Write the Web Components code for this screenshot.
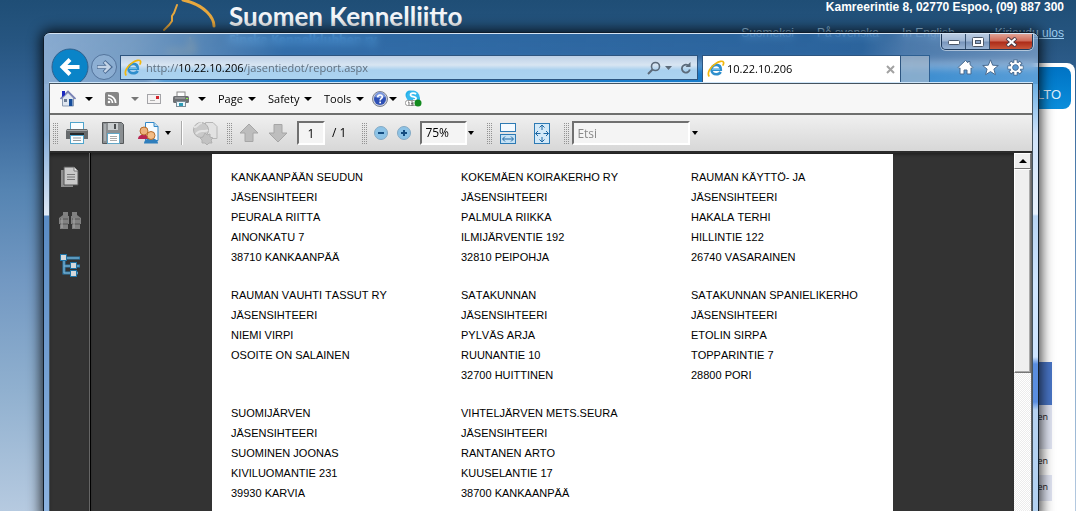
<!DOCTYPE html>
<html lang="fi">
<head>
<meta charset="utf-8">
<title>10.22.10.206</title>
<style>
html,body{margin:0;height:100%;overflow:hidden}
body{font-family:"Liberation Sans",Arial,sans-serif;font-size:12px;color:#000}
</style>
</head>
<body>
<desk-top>
  <site-page></site-page>
  <browser-window slot="window">
    <nav-bar slot="nav"></nav-bar>
    <command-bar slot="commands"></command-bar>
    <pdf-toolbar slot="toolbar"></pdf-toolbar>
    <pdf-view slot="view">
      <mailing-label><div>KANKAANPÄÄN SEUDUN</div><div>JÄSENSIHTEERI</div><div>PEURALA RIITTA</div><div>AINONKATU 7</div><div>38710 KANKAANPÄÄ</div></mailing-label>
      <mailing-label><div>KOKEMÄEN KOIRAKERHO RY</div><div>JÄSENSIHTEERI</div><div>PALMULA RIIKKA</div><div>ILMIJÄRVENTIE 192</div><div>32810 PEIPOHJA</div></mailing-label>
      <mailing-label><div>RAUMAN KÄYTTÖ- JA</div><div>JÄSENSIHTEERI</div><div>HAKALA TERHI</div><div>HILLINTIE 122</div><div>26740 VASARAINEN</div></mailing-label>
      <mailing-label><div>RAUMAN VAUHTI TASSUT RY</div><div>JÄSENSIHTEERI</div><div>NIEMI VIRPI</div><div>OSOITE ON SALAINEN</div></mailing-label>
      <mailing-label><div>SATAKUNNAN</div><div>JÄSENSIHTEERI</div><div>PYLVÄS ARJA</div><div>RUUNANTIE 10</div><div>32700 HUITTINEN</div></mailing-label>
      <mailing-label><div>SATAKUNNAN SPANIELIKERHO</div><div>JÄSENSIHTEERI</div><div>ETOLIN SIRPA</div><div>TOPPARINTIE 7</div><div>28800 PORI</div></mailing-label>
      <mailing-label><div>SUOMIJÄRVEN</div><div>JÄSENSIHTEERI</div><div>SUOMINEN JOONAS</div><div>KIVILUOMANTIE 231</div><div>39930 KARVIA</div></mailing-label>
      <mailing-label><div>VIHTELJÄRVEN METS.SEURA</div><div>JÄSENSIHTEERI</div><div>RANTANEN ARTO</div><div>KUUSELANTIE 17</div><div>38700 KANKAANPÄÄ</div></mailing-label>
    </pdf-view>
  </browser-window>
</desk-top>
<script>
function component(name, html) {
  const template = document.createElement('template');
  template.innerHTML = html;
  customElements.define(name, class extends HTMLElement {
    constructor() {
      super();
      this.attachShadow({ mode: 'open' }).append(template.content.cloneNode(true));
    }
  });
}

const IE_LOGO = `<svg width="18" height="18" viewBox="0 0 18 18" aria-hidden="true">
  <path d="M4.600 9.800h9.200c0-3-1.800-4.900-4.500-4.900-2.900 0-4.800 2.100-4.800 4.900 0 2.700 2 4.500 4.800 4.500 2.100 0 3.600-.9 4.300-2.400" fill="none" stroke="#2f8fcd" stroke-width="2.600"/>
  <path d="M5 9.300h8" stroke="#7cc6ee" stroke-width="1"/>
  <path d="M2.300 16.500C-.3 13.500 3 7 8.500 3.600 12 1.300 15.800.5 16.500 2.200c.4 1-.1 2.300-.8 3.400" fill="none" stroke="#f2b70c" stroke-width="1.700"/></svg>`;
const ARROW = `<svg class="arrow" width="8" height="4" viewBox="0 0 8 4" aria-hidden="true"><path d="M0 0h8L4 4z" fill="currentColor"/></svg>`;

component('desk-top', `
<style>
:host{display:block;position:relative;height:100vh;overflow:hidden}
::slotted([slot=window]){position:absolute;left:43px;right:37px;top:32px;bottom:-8px}
</style>
<slot></slot><slot name="window"></slot>`);

component('site-page', `
<style>
:host{display:block;height:100%;background:linear-gradient(#1f4e76,#265580 40px,#38679a 110px,#5584b2 190px,#7298c2 280px,#90b0cf 390px,#b6cae0 511px)}
header{display:flex;justify-content:space-between;height:63px;padding:0 12px 0 160px;box-sizing:border-box}
.brand{display:flex}
.brand svg{width:69px;height:63px}
h1{margin:0;font:bold 26px/33px Lato,"Open Sans",sans-serif;color:#f4f6f9;white-space:nowrap}
.brand p{margin:0;font:bold 12px/14px "Open Sans",sans-serif;color:#6bb5e8}
.info{text-align:right;font-size:12px;color:#fff;white-space:nowrap}
.info b{display:block;line-height:14px}
nav{display:flex;justify-content:flex-end;gap:23px;margin-top:12px;line-height:14px}
nav a{color:#9dcdf0;text-decoration:none}
nav a:last-child{text-decoration:underline;margin-left:17px}
main{height:100%;margin:0 1px 0 152px;background:#fff;border-radius:8px;padding:4px 4px 0;box-sizing:border-box}
.menu{display:flex;justify-content:flex-end;align-items:center;height:42px;border-radius:8px;background:linear-gradient(#0073c4,#0a8ddb);padding-right:10px}
.menu a{color:#dff0fc;font-size:13px;text-decoration:none;padding-top:12px}
table{width:calc(100% - 39px);margin:253px 0 0 20px;border-spacing:0;font:9px/12px "Open Sans",sans-serif;text-align:right}
th{height:43px;background:#4874c4;padding:0}
td{padding:6px 4px;height:14px;color:#222;vertical-align:top}
tr:nth-child(2) td{height:32px}
tr:nth-child(even) td{background:#e0e4f2}
</style>
<header>
  <div class="brand">
    <svg viewBox="0 0 69 63" fill="none" stroke="#e7a83e" stroke-linecap="round" aria-hidden="true">
      <path d="M17 5l-3 8-2 3v5l-3 4-5 5" stroke-width="2"/>
      <path d="M23 0c9 2 18 6 24 12 5 5 7 9 7 14" stroke-width="3"/>
      <path d="M30 38c1 4 2 8 4 13-8 1-18 0-27 1" stroke-width="2"/></svg>
    <div><h1>Suomen Kennelliitto</h1><p>Finska Kennelklubben ry</p></div>
  </div>
  <div class="info"><b>Kamreerintie 8, 02770 Espoo, (09) 887 300</b>
    <nav><a href="#">Suomeksi</a><a href="#">På svenska</a><a href="#">In English</a><a href="#">Kirjaudu ulos</a></nav></div>
</header>
<main>
  <div class="menu"><a href="#">LTO</a></div>
  <table><tr><th></th></tr><tr><td>en</td></tr><tr><td>en</td></tr><tr><td>en</td></tr></table>
</main>`);

component('browser-window', `
<style>
:host{display:block;box-sizing:border-box;border:1px solid #101d2b;border-radius:7px 7px 0 0;box-shadow:0 0 13px 2px rgba(0,0,0,.8)}
.glass{position:relative;display:flex;flex-direction:column;height:100%;box-sizing:border-box;border-radius:6px 6px 0 0;overflow:hidden;padding:0 5px;
 border-top:1px solid #d4e4f4;
 background:
  linear-gradient(#8fb0d6,#86aedb 50px,#dce8f6 130px,#e2ecf8 131px,#5a8cc5 132px,#96bbe6) 0 50px/5px 100% no-repeat,
  linear-gradient(#6db1e6,#cfe3fa 50px,#e8f1fc 130px,#b9d5f3 132px,#cfe5ff 200px,#cfe5ff 273px,#5a8ee0 280px,#5a8ee0 318px,#b6d2f0 326px,#b0d0f2) 100% 50px/5px 100% no-repeat,
  linear-gradient(100deg,rgba(165,195,230,.78),rgba(150,185,222,.7) 90px,rgba(60,130,205,.5) 240px,rgba(50,120,195,.4) 76%,rgba(110,155,210,.5) 80%,rgba(175,200,232,.62));
 backdrop-filter:blur(4px)}
.chrome{flex:none;height:48px;border-bottom:1px solid #cfe6fa;position:relative}
.caption{position:absolute;right:0;top:0;display:flex;border:1px solid #1f3a5a;border-top:0;border-radius:0 0 5px 5px;overflow:hidden;box-shadow:0 0 0 1px rgba(255,255,255,.5)}
.caption button{width:24px;height:15px;padding:0;border:0;border-right:1px solid #37516f;background:linear-gradient(#b9cbe1,#9fb6d3 7px,#7895bb 8px,#9ab4d4);display:grid;place-items:center}
.caption button:last-child{width:42px;border-right:0;background:linear-gradient(#e0a294,#cf6a58 7px,#ac2b18 8px,#c8563a)}
.body{flex:1;min-height:0;display:flex;flex-direction:column;border:1px solid #44535f;border-bottom:0;background:#333}
slot[name=view]{display:contents}
</style>
<div class="glass">
  <div class="chrome"><slot name="nav"></slot>
    <div class="caption">
      <button aria-label="Minimize"><svg width="12" height="6"><rect x=".5" y="1.500" width="11" height="4" rx="1" fill="#fff" stroke="#4a5667"/></svg></button>
      <button aria-label="Maximize"><svg width="12" height="10"><rect x=".5" y=".5" width="11" height="9" rx="1" fill="#fff" stroke="#4a5667"/><rect x="3.500" y="3.500" width="5" height="3" fill="#8ea7c8" stroke="#4a5667"/></svg></button>
      <button aria-label="Close"><svg width="13" height="10" viewBox="0 0 13 10"><path d="M2 1l9 8M11 1L2 9" stroke="#4c3b46" stroke-width="4"/><path d="M2.500 1.500l8 7M10.500 1.500l-8 7" stroke="#fff" stroke-width="2.200"/></svg></button>
    </div>
  </div>
  <div class="body"><slot name="commands"></slot><slot name="toolbar"></slot><slot name="view"></slot></div>
</div>`);

component('nav-bar', `
<style>
:host{display:flex;height:48px;padding:14px 9px 0 2px;box-sizing:border-box;overflow:hidden;font:11px/16px "Open Sans","Noto Sans",sans-serif}
button{border:0;padding:0;background:none;display:grid;place-items:center;color:#5b6a7a}
.back,.fwd{flex:none}
.back{width:38px;height:38px}
.fwd{width:28px;height:28px;margin:5px 2px 0 1px}
.address{flex:1;display:flex;align-items:center;box-sizing:border-box;height:25px;margin-top:7px;border:1px solid #2d5580;background:linear-gradient(#bdd0e6,#d8e5f2 9px,#a9d0ee 14px,#abd3f0);padding:0 5px 0 3px}
.url{flex:1;padding-left:4px;color:#5f6f7f;white-space:nowrap}
.url b{font-weight:400;color:#000}
.address button+button{margin-left:4px}
.address .stop{margin-left:8px}
.tab{display:flex;align-items:center;box-sizing:border-box;width:199px;height:27px;margin:7px 0 0 4px;border:1px solid #2d5580;border-bottom:0;background:#fff;padding:0 5px 0 4px}
.tab span{flex:1;padding-left:2px}
.new{width:29px;height:27px;margin-top:7px;border:1px solid #2d5f92;border-left:0;border-bottom:0;background:rgba(165,185,205,.7);box-sizing:border-box}
.tools{display:flex;gap:8px;margin:7px 0 0 27px;height:24px}
</style>
<button class="back" aria-label="Back"><svg width="38" height="38"><circle cx="19" cy="19" r="18" fill="#0a84c8" stroke="#31618e"/><path d="M28.500 19H13M19 11.500L11.500 19l7.500 7.500" fill="none" stroke="#fff" stroke-width="4"/></svg></button>
<button class="fwd" aria-label="Forward"><svg width="28" height="28"><circle cx="14" cy="14" r="12.500" fill="rgba(180,205,235,.3)" stroke="#54749c"/><path d="M7 14h12M14 8.500l6 5.500-6 5.500" fill="none" stroke="#4d6d95" stroke-width="4"/><path d="M7.500 14h11M14.500 9l5 5-5 5" fill="none" stroke="#c3d3e6" stroke-width="2.400"/></svg></button>
<div class="address">${IE_LOGO}<span class="url">http://<b>10.22.10.206</b>/jasentiedot/report.aspx</span>
  <button aria-label="Search"><svg width="14" height="14" fill="none" stroke="currentColor"><circle cx="8.500" cy="5.500" r="4" stroke-width="1.600"/><path d="M5.500 8.500L1 13" stroke-width="2"/></svg></button>
  <button aria-label="Search options"><svg width="7" height="4"><path d="M0 0h7L3.500 4z" fill="currentColor"/></svg></button>
  <button class="stop" aria-label="Refresh"><svg width="12" height="14" fill="none" stroke="currentColor"><path d="M8 4.200a4 4 0 1 0 1.800 4.300" stroke-width="1.800"/><path d="M10.500 1v5H5.500z" fill="currentColor" stroke="none"/></svg></button>
</div>
<div class="tab">${IE_LOGO}<span>10.22.10.206</span><button aria-label="Close tab"><svg width="9" height="9"><path d="M1 1l7 7M8 1L1 8" stroke="#a2a2a2" stroke-width="2"/></svg></button></div>
<button class="new" aria-label="New tab"></button>
<div class="tools">
  <button aria-label="Home"><svg width="17" height="17" viewBox="0 0 17 17"><path d="M8.500 1.500l2.500 2.200V2.500h2v3.200l3 2.800-1 1-1-.6V15h-4v-4H7v4H3V8.900l-1 .6-1-1z" fill="#fff" stroke="#4a6a8e"/></svg></button>
  <button aria-label="Favorites"><svg width="17" height="17" viewBox="0 0 17 17"><path d="M8.500.8l2.200 5.400 5.600.3-4.400 3.600 1.500 5.600-4.900-3.100-4.900 3.100 1.500-5.600L.7 6.500l5.600-.3z" fill="#fff" stroke="#4a6a8e"/></svg></button>
  <button aria-label="Tools"><svg width="17" height="17" viewBox="-8.500 -8.500 17 17"><g stroke="#4a6a8e" stroke-width="4.200"><path d="M0-8V8M-8 0H8M-5.600-5.600L5.600 5.600M5.600-5.600L-5.600 5.600"/></g><circle r="5.800" fill="#4a6a8e"/><g stroke="#fff" stroke-width="2.400"><path d="M0-7.300V7.300M-7.300 0H7.300M-5-5L5 5M5-5L-5 5"/></g><circle r="4" fill="#4d8fca" stroke="#fff" stroke-width="2"/><circle r="2.800" fill="#5b9ad2" stroke="#4a6a8e" stroke-width=".8"/></svg></button>
</div>`);

component('command-bar', `
<style>
:host{flex:none;display:flex;align-items:center;gap:12px;height:29px;padding-left:10px;background:#f7f7f7;border-bottom:2px solid #6e6f6e;font:11px/16px "Open Sans","Noto Sans",sans-serif}
button{display:flex;align-items:center;justify-content:space-between;border:0;padding:0;background:none;font:inherit;color:#000;white-space:nowrap}
.icon{width:33px}.rss{width:34px;color:#777}.help{width:25px}
.page{width:38px}.safety{width:44px}.tool{width:40px}
.near{margin-left:-4px}
</style>
<button class="icon" aria-label="Home"><svg width="16" height="17" viewBox="0 0 16 17"><path d="M2.500 8L8 2.500 13.500 8v8H2.500z" fill="#dfe6ef" stroke="#8b9ab0"/><path d="M.5 9L8 1.500 15.500 9" fill="none" stroke="#777fb5" stroke-width="1.600"/><path d="M2 1h3v4L2 7z" fill="#1a28c0"/><rect x="9" y="9" width="3.500" height="7" fill="#164d9b"/><rect x="4" y="9" width="3" height="3" fill="#6c7c93"/></svg>${ARROW}</button>
<button class="rss" aria-label="Feeds"><svg width="14" height="14"><rect width="14" height="14" rx="2" fill="#858585"/><g fill="none" stroke="#fff" stroke-width="1.700"><path d="M3 6.500A4.500 4.500 0 0 1 7.500 11M3 3.300A7.700 7.700 0 0 1 10.700 11"/></g><circle cx="4" cy="10" r="1.300" fill="#fff"/></svg>${ARROW}</button>
<button class="near" aria-label="Mail"><svg width="14" height="12"><rect x=".5" y="1.500" width="13" height="9" fill="#f5f3f3" stroke="#a4a4a8"/><rect x="9" y="3" width="3" height="3" fill="#d5242b"/><path d="M3 7.500h5" stroke="#b0b0b0"/></svg></button>
<button class="icon" aria-label="Print"><svg width="16" height="16"><rect x="4" y="1" width="8" height="5" fill="#fff" stroke="#888"/><rect x="0" y="5" width="16" height="7" rx="1.500" fill="#6d6f73"/><path d="M2 7h10" stroke="#bbb"/><rect x="13" y="7" width="2" height="1" fill="#8f4"/><rect x="3.500" y="10.500" width="9" height="5" fill="#e9f5fb" stroke="#7d8c96"/><rect x="6" y="12" width="4" height="3" fill="#2d9bb5"/></svg>${ARROW}</button>
<button class="page">Page${ARROW}</button>
<button class="safety">Safety${ARROW}</button>
<button class="tool">Tools${ARROW}</button>
<button class="help near" aria-label="Help"><svg width="16" height="16"><circle cx="8" cy="8" r="7.500" fill="#c9cedc" stroke="#7c8290"/><circle cx="8" cy="8" r="6" fill="#2e50b5"/><path d="M3 6a5 5 0 0 1 10 0q-5 2-10 0" fill="#7b97dc"/><path d="M5.700 6.300c0-3 4.600-3 4.600-.3 0 1.800-2.200 1.600-2.200 3.500" fill="none" stroke="#fff" stroke-width="1.600"/><rect x="7.300" y="10.600" width="1.700" height="1.700" fill="#fff"/></svg>${ARROW}</button>
<button class="near" aria-label="Skype"><svg width="17" height="17"><circle cx="5" cy="5" r="4.500" fill="#20aee8"/><circle cx="10.500" cy="9" r="4.500" fill="#20aee8"/><circle cx="8" cy="7" r="6.500" fill="#36b9ee"/><path d="M11 4.200C9.800 2.600 5.500 2.700 5.500 4.900c0 2.400 5.600 1 5.600 3.600 0 1.200-1.600 1.600-3.100 1.500" fill="none" stroke="#fff" stroke-width="1.700"/><rect x=".5" y="10.500" width="11" height="5" rx="2" fill="#fff" stroke="#999"/><path d="M3 12h1v3M6 12h2v3H6M6 13.500h2" fill="none" stroke="#555" stroke-width=".8"/><circle cx="13" cy="13" r="3.500" fill="#128a1e"/></svg></button>`);

component('pdf-toolbar', `
<style>
:host{flex:none;display:flex;align-items:center;height:36px;padding-left:3px;background:linear-gradient(#f0f0f0,#d7d7d7);border-bottom:2px solid #2b2b2b;font:12px/16px "Open Sans","Noto Sans",sans-serif}
button{display:flex;align-items:center;gap:4px;border:0;padding:0;background:none;color:#000}
.grip{flex:none;width:5px;height:21px;margin-right:7px;background:conic-gradient(#929292 25%,transparent 0) -1px 0/2px 2px}
.sep{width:1px;height:24px;background:#aaa;border-right:1px solid #fff}
input,select{box-sizing:border-box;height:24px;border:2px solid;border-color:#707070 #fff #fff #707070;border-radius:0;background:#f4f4f4;font:inherit;padding:0 3px;margin:0;color:#000;appearance:none;outline:0}
.num{width:28px;text-align:center}
select{width:47px}
.find{width:118px;flex:0 1 118px}
.find::placeholder{color:#8a8a8a;opacity:1}
.a{margin-right:7px}.b{margin-right:13px}.c{margin-right:9px}.d{margin-right:16px}
.small{width:7px}
.last{margin-right:3px}
</style>
<div class="grip"></div>
<button class="b" aria-label="Print file"><svg width="24" height="24"><rect x="5.500" y="1.500" width="13" height="8" fill="#f8fdff" stroke="#4fa4cc"/><path d="M2 8h20l1 2v8H1v-8z" fill="#666a6c"/><path d="M2 9.500h20" stroke="#a3a7a9"/><path d="M5 13h14" stroke="#25282a" stroke-width="2"/><rect x="5.500" y="14.500" width="13" height="8" fill="#f8fdff" stroke="#4fa4cc"/><path d="M8 17h8M8 19.500h8" stroke="#999"/></svg></button>
<button class="b" aria-label="Save a copy"><svg width="22" height="22"><path d="M.5.5h19l2 2v19H.5z" fill="#8b8f92" stroke="#55585a"/><path d="M3 2v17" stroke="#a9adb0" stroke-width="2"/><rect x="6" y="1" width="10" height="7" fill="#c9cdcf"/><rect x="12" y="2" width="2" height="5" fill="#4b4e50"/><rect x="5.500" y="11.500" width="12" height="10" fill="#fff" stroke="#62a6c6"/><path d="M8 14.500h7M8 16.500h7M8 18.500h7" stroke="#aaa"/></svg></button>
<button class="c" aria-label="Collaborate"><svg width="24" height="24"><path d="M8.500 1.500H17l4 4v14H8.500z" fill="#f5fbff" stroke="#3288c8"/><path d="M17 1.500v4h4" fill="#bddcf0" stroke="#3288c8"/><path d="M1 18c0-6 11-6 11 0z" fill="#b82553"/><circle cx="7" cy="10" r="4" fill="#edb27c" stroke="#b66d2b"/><path d="M7 22.500c0-7 14-7 14 0z" fill="#2f7ebc"/><circle cx="14" cy="14.500" r="4" fill="#f3bd87" stroke="#b66d2b"/></svg><svg width="7" height="4"><path d="M0 0h6L3 4z"/></svg></button>
<div class="sep c"></div>
<button class="c" aria-label="Convert" disabled><svg width="26" height="24"><path d="M13.500 1.500H21l4 4v12H13.500z" fill="#e2e2e2" stroke="#b6b6b6"/><circle cx="9" cy="9" r="7.500" fill="#c9c9c9" stroke="#b0b0b0"/><path d="M2 6c4 1 3-4 8-4M4 13c4-6 8-1 12-4" fill="none" stroke="#e3e3e3" stroke-width="2"/><path d="M13 12l2 2 3-1v3l3 1-2 2 1 3-3 0-2 2-2-2-3 0v-3l-2-2 3-1z" fill="#c2c2c2" stroke="#b0b0b0"/></svg></button>
<div class="grip"></div>
<button class="c" aria-label="Previous page" disabled><svg width="20" height="20"><path d="M10 1l9 9h-5v8.500H6V10H1z" fill="#bdbdbd" stroke="#a6a6a6"/></svg></button>
<button class="c" aria-label="Next page" disabled><svg width="20" height="20"><path d="M10 19l9-9h-5V1.500H6V10H1z" fill="#bdbdbd" stroke="#a6a6a6"/></svg></button>
<input class="num a" value="1" aria-label="Page number"><span class="d">/ 1</span>
<div class="grip"></div>
<button class="c" aria-label="Zoom out"><svg width="14" height="14"><circle cx="7" cy="7" r="6.500" fill="#8dc3e6" stroke="#83a9c4"/><path d="M4 7h6" stroke="#134c80" stroke-width="2"/></svg></button>
<button class="c" aria-label="Zoom in"><svg width="14" height="14"><circle cx="7" cy="7" r="6.500" fill="#8dc3e6" stroke="#83a9c4"/><path d="M4 7h6M7 4v6" stroke="#134c80" stroke-width="2"/></svg></button>
<select aria-label="Zoom"><option>75%</option></select><svg class="small b" height="4"><path d="M1 0h6L4 4z"/></svg>
<div class="grip"></div>
<button class="d" aria-label="Fit width"><svg width="18" height="21"><rect x="1.500" y=".5" width="15" height="8" fill="#f4faff" stroke="#2d7ab4"/><rect x="1.500" y="11.500" width="15" height="9" fill="#c6e2f5" stroke="#2d7ab4"/><path d="M4 16h10M6 13.500L3.500 16 6 18.500M12 13.500l2.500 2.500-2.500 2.500" fill="none" stroke="#1d67a3"/></svg></button>
<button class="b" aria-label="Fit page"><svg width="18" height="21"><rect x="1.500" y=".5" width="15" height="20" fill="#d3e9f8" stroke="#2d7ab4"/><path d="M9 2v5M6.500 4.500L9 2l2.500 2.500M9 19v-5M6.500 16.500L9 19l2.500-2.500M2.500 10.500h5M5 8l-2.500 2.500L5 13M15.500 10.500h-5M13 8l2.500 2.500L13 13" fill="none" stroke="#1d67a3"/></svg></button>
<div class="grip last"></div>
<input class="find" placeholder="Etsi" aria-label="Etsi"><button aria-label="Find options"><svg width="8" height="4"><path d="M2 0h6L5 4z"/></svg></button>`);

component('pdf-view', `
<style>
:host{flex:1;min-height:0;display:flex;overflow:hidden;background:#333}
.side{flex:none;width:40px;box-sizing:content-box;border-right:1px solid #000;display:flex;flex-direction:column;align-items:center;gap:22px;padding-top:13px;box-shadow:inset -1px 0 #666,inset 0 4px 4px -2px #1a1a1a}
.side button{border:0;padding:0;background:none;display:block;height:22px}
.doc{flex:1;min-width:0;overflow:hidden;box-shadow:inset 0 3px 3px -1px #222}
.paper{box-sizing:border-box;width:min(681px,100%);min-height:120%;margin:1px auto 0;background:#fff;padding:13px 0 0 19px;display:grid;grid-template-columns:repeat(3,230px);grid-auto-rows:100px;row-gap:18px;align-content:start}
.scroll{flex:none;width:17px;display:flex;flex-direction:column;background:repeating-conic-gradient(#fff 0 25%,#ececec 0 50%) 0 0/2px 2px;border-right:1px solid #666}
.scroll button,.thumb{box-sizing:border-box;border:1px solid;border-color:#fff #777 #777 #fff;background:#efefef}
.scroll button{height:16px;padding:0;display:grid;place-items:center}
.thumb{height:56%;box-shadow:inset -1px -1px #aaa}
</style>
<div class="side">
  <button aria-label="Pages"><svg width="20" height="22"><path d="M1 4h12v17H1z" fill="#8e8e8e"/><path d="M4 1h10l4 4v14H4z" fill="#c9c9c9" stroke="#555"/><path d="M14 1v4h4" fill="#eee" stroke="#777"/><path d="M7 8.500h8M7 11h8M7 13.500h8" stroke="#777"/></svg></button>
  <button aria-label="Search"><svg width="22" height="22"><path d="M4 2h5v4h1v8H9v5H1v-5H0V8l4-3zM18 2h-5v4h-1v8h1v5h8v-5h1V8l-4-3z" fill="#818181"/><path d="M1 9h8M13 9h8M1 14h8M13 14h8" stroke="#555"/><path d="M3 8v10M15 8v10" stroke="#aaa"/></svg></button>
  <button aria-label="Model tree"><svg width="21" height="23"><path d="M3 4h17M4 4v15h14M4 12h16" fill="none" stroke="#2c7fb0" stroke-width="3"/><path d="M4 4h15M4 4v15h14M4 12h15" fill="none" stroke="#8ab4cc"/><g fill="#d5d8da" stroke="#1f73a5"><rect x=".5" y=".5" width="6" height="6"/><rect x="10.500" y="8.500" width="6" height="6"/><rect x="10.500" y="16.500" width="6" height="6"/></g></svg></button>
</div>
<div class="doc"><div class="paper"><slot></slot></div></div>
<div class="scroll"><button aria-label="Scroll up"><svg width="8" height="4"><path d="M0 4h8L4 0z"/></svg></button><div class="thumb"></div></div>`);

component('mailing-label', `
<style>:host{display:block;font:11px/20px "Liberation Sans",Arial,sans-serif;font-kerning:none;white-space:nowrap}</style>
<slot></slot>`);
</script>
</body>
</html>
